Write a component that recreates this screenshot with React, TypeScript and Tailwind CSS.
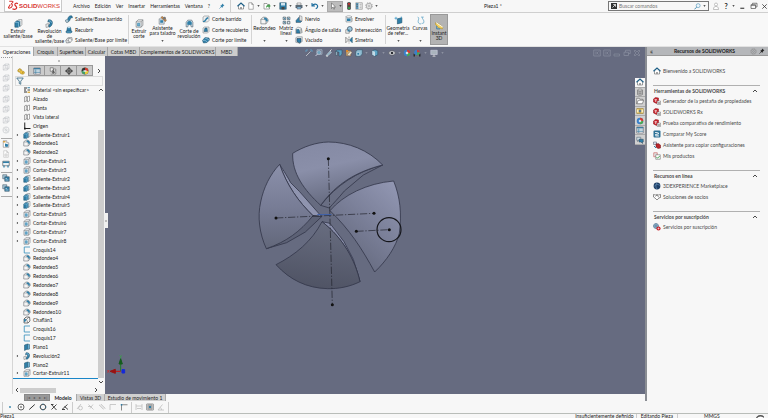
import { useState, type ReactNode } from "react";
import clsx from "clsx";

const B = "#2f7fa8";
const G = "#6f7478";

const icons: Record<string, ReactNode> = {
  home: (
    <>
      <path d="M3 8v6h10V8" fill="#fff" stroke="#444" />
      <path d="M1 8.5 8 2l7 6.5" fill="none" stroke="#1d5f86" strokeWidth="2.4" />
      <path d="M6.5 14v-4h3v4" fill="#888" />
    </>
  ),
  doc: <path d="M3.5 1.5h6l3 3.5v9.500h-9zM9.500 1.500V5h3" fill="#fff" stroke="#666" />,
  docFaint: <path d="M3.5 1.5h6l3 3.5v9.500h-9zM9.500 1.500V5h3M6 8h4v4H6z" fill="#fff" stroke="#bbb" strokeWidth="1.200" />,
  open: (
    <>
      <path d="M2 14V3h6l1 2h4v9z" fill="#fff" stroke="#555" />
      <path d="M6 12c0-5 2-6 5-6V3.500L15.500 8 11 12V9.500C9 9.500 7 10 6 12z" fill="#4ba052" />
    </>
  ),
  save: (
    <>
      <path d="M1.500 1.500h13v13h-13z" fill={B} stroke="#23485c" />
      <path d="M4 2h8v5H4z" fill="#cfe3ee" />
      <path d="M5 10h6v5H5z" fill="#444" />
    </>
  ),
  print: (
    <>
      <path d="M4 2h8v4H4z" fill="#fff" stroke="#555" />
      <path d="M1 6h14v6H1z" fill="#5a6b76" />
      <path d="M4 9.500h8V14H4z" fill="#8cc4e2" stroke="#445" />
    </>
  ),
  undo: <path d="M2 2v6h6M2.500 7.500C5 3.500 11 3 13 7c1 3-1 5.500-3.500 6.500" fill="none" stroke="#1f6f9f" strokeWidth="2.200" />,
  cursor: <path d="M5 2v11l2.600-2.500 2 4 1.600-.8-2-3.800H13z" fill="#fff" stroke="#444" />,
  traffic: (
    <>
      <rect x="4.500" y="0.500" width="7" height="15" rx="2" fill="#333" />
      <circle cx="8" cy="4" r="2" fill="#d33" />
      <circle cx="8" cy="8" r="1.600" fill="#865" />
      <circle cx="8" cy="12" r="2" fill="#3b5" />
    </>
  ),
  list: (
    <>
      <path d="M1.500 1.500h13v13h-13z" fill="#fff" stroke="#666" />
      <path d="M2 2h5v12H2z" fill="#5b93b3" />
      <path d="M9 4.500h4M9 8h4M9 11.500h4M3 5h3M3 9h3" stroke="#555" />
    </>
  ),
  gear: (
    <>
      <circle cx="8" cy="8" r="5.500" fill="none" stroke="#888" strokeWidth="1.300" />
      <circle cx="8" cy="8" r="7" fill="none" stroke="#999" strokeWidth="1.300" strokeDasharray="2.700 2.800" />
      <circle cx="8" cy="8" r="2.200" fill="none" stroke="#777" />
    </>
  ),
  pin: (
    <>
      <path d="M9 1.500 14.500 7l-2 .5-3 3-.5 2.500L3 7l2.500-.5 3-3z" fill={B} />
      <path d="m6 10-5 5" stroke={B} strokeWidth="1.500" />
    </>
  ),
  pinDark: (
    <>
      <path d="M9 1.500 14.500 7l-2 .5-3 3-.5 2.500L3 7l2.500-.5 3-3z" fill="#222" />
      <path d="m6 10-5 5" stroke="#222" strokeWidth="1.500" />
    </>
  ),
  user: (
    <>
      <circle cx="8" cy="5" r="3" fill="#fff" stroke="#888" />
      <path d="M3 15c0-5 2-6 5-6s5 1 5 6z" fill="#fff" stroke="#888" />
    </>
  ),
  search: (
    <>
      <circle cx="9.500" cy="6" r="4.500" fill="#eef6fb" stroke="#2f7fa8" strokeWidth="1.200" />
      <path d="m6 9.500-5 5" stroke="#2f7fa8" strokeWidth="2" />
    </>
  ),
  restore: <path d="M5 5V2.500h9V10h-3M2 5.500h9v7.500H2zM2 6.500h9" fill="none" stroke="#444" strokeWidth="1.300" />,
  min: <path d="M3 12h9" stroke="#333" strokeWidth="2.500" />,
  close: <path d="m3 3 10 10M13 3 3 13" stroke="#333" strokeWidth="1.800" />,
  extrude: (
    <>
      <path d="m6 3 2.500-2H14v9l-3 3.500z" fill="#f5f5f5" stroke={G} />
      <path d="m1.500 6 3-2.500h6V12L8 14.500H1.500z" fill={B} stroke="#1d4e68" />
      <path d="M1.500 6H8v8.500M8 6l2.500-2.500" fill="none" stroke="#9fd0ea" />
    </>
  ),
  revolve: (
    <>
      <path d="M6 1.500c5-1 8 2.500 7 6.500s-3 6-6 6.500l-3-3c3 0 5-2 5-4s-2-3-4-2z" fill={B} stroke="#1d4e68" />
      <path d="M1.500 9.500 6 8v6l-4 1z" fill="#eee" stroke={G} />
      <path d="M7 3c3 0 4.500 2 4.500 4" fill="none" stroke="#9fd0ea" />
    </>
  ),
  sweep: (
    <>
      <path d="M1 10.500C5 11 5 8 6.500 5S11 .5 14 2l1 3.500c-3-.5-4 1-5 4s-3 5-7 5z" fill={B} stroke="#1d4e68" />
      <circle cx="4" cy="12" r="2.800" fill="#b8d9ea" stroke={G} />
    </>
  ),
  loft: (
    <>
      <path d="M5 2.500h6L13 12H3z" fill={B} stroke="#1d4e68" />
      <ellipse cx="8" cy="3" rx="3" ry="1.500" fill="#b8d9ea" />
      <path d="m1.500 11.500 3-1.500h8l2 2-3 2h-8z" fill="#4f9cc4" stroke="#1d4e68" />
    </>
  ),
  boundary: (
    <>
      <path d="m1.500 9 4-5 8-1 1 5-4 5-7.500 1z" fill="#f3f3f3" stroke={G} strokeWidth="1.300" />
      <path d="M1.500 9c3-2 6 0 9 4M5.500 4c3 0 6 1 9 4M9 3.500C7 6 6 10 6.500 13.500" fill="none" stroke={G} />
    </>
  ),
  cut: (
    <>
      <path d="m2 5 3.500-3.500H14V11l-3 3.500H2z" fill="#f4f4f4" stroke={G} strokeWidth="1.200" />
      <path d="M2 5h9v9.500M11 5l3-3.500" fill="none" stroke={G} />
      <path d="M4.500 7.500h4v5h-4z" fill="#6fb0d0" stroke={B} />
    </>
  ),
  wizard: (
    <>
      <path d="M2 5h9v9.500H2z" fill="#cfe0ea" stroke={G} />
      <path d="M4 7.500h5v4.500H4z" fill={B} />
      <path d="m5 2 8 8 2-3-7-6z" fill="#d98b3c" stroke="#765" />
      <circle cx="11.500" cy="4" r="2.500" fill="#777" />
    </>
  ),
  cutRevolve: (
    <>
      <path d="M2 6 5 2h7l2 4v8h-3l-1-4H6l-1 4H2z" fill="#c9dbe5" stroke="#456" />
      <path d="M4 6c2-3 6-3 8 0v4H4z" fill={B} />
    </>
  ),
  cutSweep: (
    <>
      <path d="M2 4 5 2h9v9l-3 3H2z" fill="#eee" stroke={G} />
      <path d="M2 12c5 0 3-6 10-8l1 3c-5 1-4 6-8 7H2z" fill={B} />
    </>
  ),
  cutLoft: (
    <>
      <path d="M2 4 5 2h9v9l-3 3H2z" fill="#eee" stroke={G} />
      <path d="M6 4h4l1 7H4z" fill={B} stroke="#1d4e68" />
    </>
  ),
  cutBoundary: (
    <>
      <path d="m1 9 5-6 8 1 1 4-5 5-7 1z" fill={B} stroke="#1d4e68" />
      <path d="M2 9c3-1 6 0 8 3M6 4c3 1 6 2 8 4" fill="none" stroke="#cde8f5" />
    </>
  ),
  fillet: (
    <>
      <path d="m1.500 6 4-4C12 1.500 15 5 14.500 9l-4 5h-9z" fill="#f4f4f4" stroke={G} strokeWidth="1.200" />
      <path d="M7.500 2.500C12 2.500 14 5 14 9l-3 1C11 7 9.500 6 7 6z" fill={B} />
      <path d="M1.500 6H6c3 0 4.500 2 4.500 5v3" fill="none" stroke={G} />
    </>
  ),
  chamfer: (
    <>
      <path d="m2 6 4-4h7l1 8-4 4H2z" fill="#f4f4f4" stroke="#444" strokeWidth="1.400" />
      <path d="m2 6 5 1 3 7M7 7l5-5" fill="none" stroke="#444" />
      <path d="m2 6 5 1-2 4-3 1z" fill={B} />
    </>
  ),
  pattern: (
    <>
      <path d="M2 2h4.500v4.500H2zM9.500 2H14v4.500H9.500zM2 9.500h4.500V14H2zM9.500 9.500H14V14H9.500z" fill="#e0ebf1" stroke="#4c5c66" strokeWidth="1.300" />
      <path d="m3 3 3 3M10 3l3 3M3 10l3 3" stroke={B} strokeWidth="1.500" />
    </>
  ),
  rib: (
    <>
      <path d="M2 11 9 3v8l5 1-3 3H2z" fill={B} stroke="#456" />
      <path d="m9 1 5 2v9l-5-2z" fill="#e4e4e4" stroke={G} />
    </>
  ),
  draft: (
    <>
      <path d="m1.500 6 4-4 7 2 2 9-4 2h-9z" fill="#e9eff2" stroke={G} />
      <path d="M3 7h5l2 7H3z" fill={B} stroke="#1d4e68" />
      <path d="M12 5.500v8" stroke="#444" />
    </>
  ),
  shell: (
    <>
      <path d="M1.500 3.500 5 1.500h9.500v9l-4 4-9-2z" fill="#dfe7eb" stroke={G} />
      <path d="M4 5h8v7l-3 2-5-3z" fill={B} stroke="#234" />
    </>
  ),
  wrap: (
    <>
      <path d="M2 3h11v11H2z" fill="#dce6ec" stroke={G} />
      <ellipse cx="7.500" cy="3.500" rx="5.500" ry="2" fill="#fff" stroke={G} />
      <path d="M4 7h7v5H4z" fill={B} />
      <path d="M13 6h2.500v7H13z" fill="#bbb" />
    </>
  ),
  intersect: (
    <>
      <circle cx="9.500" cy="6" r="5" fill="#9cc8df" stroke="#345" strokeWidth="1.300" />
      <path d="M1.500 7.500h7v7h-7z" fill="#eee" stroke="#555" />
      <path d="M5 7.500h4v3.500H5z" fill={B} />
    </>
  ),
  mirror: (
    <>
      <path d="M1.500 2.500v11L6 9V7z" fill="#eee" stroke="#444" />
      <path d="M14.500 2.500v11L10 9V7z" fill={B} stroke="#1d4e68" />
      <path d="M8 1v14" stroke="#444" strokeDasharray="3 1" />
    </>
  ),
  refGeom: (
    <>
      <path d="m6 5 8-2v9l-8 2z" fill={B} stroke="#1d4e68" />
      <path d="M1 4h5M3.500 1.500v5M13 1v3" stroke="#4aa0cc" strokeWidth="1.500" />
    </>
  ),
  curves: (
    <path d="M3 2c4 1 0 6 1 9s3 3 5 3M9 2h4c-4 2 1 4 1 8s-2 3-4 3" fill="none" stroke="#5aa2c6" strokeWidth="1.400" />
  ),
  instant: (
    <>
      <path d="m1 3 6 2 7 6-1 3-7-2-5-6z" fill="#f2d05c" stroke="#a98a2a" />
      <path d="m2 3 12 8" stroke="#fff" strokeWidth="1.600" />
      <path d="M3 9v5h6" fill="none" stroke={B} strokeWidth="1.500" />
    </>
  ),
  part: (
    <>
      <path d="M1.500 6.500 4 3.500l4 .5 2 4 4 1 1 3-2.500 2.500-5-1L5 10l-3-.500z" fill="#ecc13f" stroke="#9a7818" />
      <circle cx="5.500" cy="6.500" r="1.800" fill="#fff3c0" stroke="#9a7818" />
      <circle cx="11.500" cy="11.500" r="1.200" fill="#9a7818" />
    </>
  ),
  table: (
    <>
      <path d="M1.500 2h13v12h-13z" fill="#fff" stroke="#445" />
      <path d="M1.500 2h13v3h-13z" fill="#3f7c9e" />
      <path d="M1.500 8h13M1.500 11h13M5.500 5v9" stroke="#3f7c9e" strokeWidth="1.300" />
    </>
  ),
  config: (
    <>
      <path d="M2.500 1.500h6v7h-6zM5.500 11h2v3h-4M9 4h4.500v10H9z" fill="#eee" stroke="#444" />
      <path d="m6 7 6 5M12 7l-5 5" stroke="#444" strokeWidth="1.500" />
    </>
  ),
  target: (
    <>
      <circle cx="8" cy="8" r="4.800" fill="none" stroke="#222" strokeWidth="1.600" />
      <path d="M8 0v16M0 8h16" stroke="#222" strokeWidth="1.600" />
    </>
  ),
  ball: (
    <>
      <circle cx="8" cy="8" r="6.500" fill="#e8c93a" stroke="#333" />
      <path d="M8 8V1.500A6.500 6.500 0 0 1 14.500 8z" fill="#d23b32" />
      <path d="M8 8H1.500A6.500 6.500 0 0 1 8 1.500z" fill="#2f3338" />
      <path d="M8 8v6.500A6.500 6.500 0 0 0 14.500 8z" fill="#e8c93a" />
      <path d="M8 8v6.500A6.500 6.500 0 0 1 1.500 8z" fill="#3f9f6b" />
      <path d="M5 6.500h6v3H5z" fill="#e9eef2" />
    </>
  ),
  globeBall: (
    <>
      <circle cx="8" cy="8" r="6.500" fill="#3a80c9" />
      <path d="M8 8V1.500A6.500 6.500 0 0 1 14.500 8z" fill="#d23b32" />
      <path d="M8 8v6.500A6.500 6.500 0 0 0 14.500 8z" fill="#4aa653" />
      <path d="M5 8 8 5l3 3-3 3z" fill="#e8eef2" />
    </>
  ),
  scene: (
    <>
      <circle cx="8" cy="7" r="5.500" fill="#3a80c9" />
      <path d="M8 7V1.500A5.500 5.500 0 0 1 13.500 7z" fill="#d23b32" />
      <path d="M8 7v5.500A5.500 5.500 0 0 0 13.500 7z" fill="#4aa653" />
      <path d="M1 15V9l4 3h6l4-3v6z" fill="#2a2d33" />
      <path d="M5 12.500h2V15H5zM9 12.500h2V15H9z" fill="#ddd" />
    </>
  ),
  funnel: <path d="M1.500 2h13L9.500 8.500v6l-3-1.500V8.500z" fill="#eaf4fa" stroke="#2c5d78" strokeWidth="1.500" />,
  material: (
    <>
      <path d="M2 4h6M2 8h4M2 12h6" stroke="#333" strokeWidth="2" />
      <path d="M9 3.500h5" stroke={B} strokeWidth="2" />
      <path d="M9 8h5" stroke="#444" strokeWidth="2" />
      <path d="M9 12.500h5" stroke="#d9a52c" strokeWidth="2.500" />
    </>
  ),
  plane: <path d="m3 4 3.500-2v10L3 14zM9 3.500 13 2v10l-4 1.500zM6.500 4H9M6.500 12H9" fill="#fff" stroke="#666" strokeWidth="1.100" />,
  origin: (
    <>
      <path d="M3.500 1v12H15" fill="none" stroke="#222" strokeWidth="2" />
      <path d="M2 11.500h3.500V15H2z" fill="#222" />
    </>
  ),
  sketch: <path d="M14 2H2.500v12H14" fill="none" stroke="#3f93bd" strokeWidth="1.700" />,
  bluePlane: (
    <>
      <path d="m3 4 6-2v10l-6 3z" fill={B} stroke="#1d4e68" />
      <path d="m9 2 4 1v9l-4 1z" fill="#68b0d4" stroke="#1d4e68" />
    </>
  ),
  cube: <path d="m2.500 5 4-3H14v8.500l-3.500 3.500h-8zM2.500 5h8v9M10.500 5 14 2M6.500 2v8.500H14M6.500 10.500l-4 3.500" fill="none" stroke="#c3c6c9" strokeWidth="1.200" />,
  sphere: (
    <>
      <circle cx="8" cy="8" r="6.300" fill="none" stroke="#c3c6c9" strokeWidth="1.200" />
      <path d="M2 8h12M8 2v12M4 4l8 8" stroke="#c3c6c9" />
    </>
  ),
  macro: (
    <>
      <path d="M2.500 1.500h7v4h4v9h-11z" fill="#fff" stroke="#666" />
      <path d="m6 7 7 2-2 5-5-1z" fill={B} />
      <path d="M2 2h5v3H2z" fill="#d9a54a" />
    </>
  ),
  screen: (
    <>
      <path d="M1.500 2.500h13v9h-13z" fill="#e9f2f7" stroke="#555" strokeWidth="1.300" />
      <path d="M2 3h12v3H2z" fill={B} />
      <path d="M4 11v4M12 11v4" stroke={B} strokeWidth="2.500" />
    </>
  ),
  stack: (
    <>
      <path d="M1.500 1.500h8v8h-8z" fill="#a8cadb" stroke="#345" />
      <path d="M5.500 5.500h9v9h-9z" fill={B} stroke="#345" />
      <path d="M7 12h6M7 9h3" stroke="#fff" />
    </>
  ),
  zoomFit: (
    <>
      <path d="M2 6V2h4M10 2h4v4" fill="none" stroke="#5fa6cc" strokeWidth="1.500" />
      <path d="m2 14 9-9" stroke="#b9bcc3" strokeWidth="2" />
    </>
  ),
  zoomArea: (
    <>
      <path d="M4 1.500h10v9H4z" fill="none" stroke="#a5b9c8" strokeWidth="1.500" />
      <circle cx="8" cy="7" r="4" fill="#6fa3bd" stroke="#ccd" />
      <path d="m5 10-4 4" stroke="#ccd" strokeWidth="2" />
    </>
  ),
  brush: (
    <>
      <path d="m2 13 8-9 3 3-8 7z" fill="#8fb3c6" stroke="#cfd6dc" />
      <path d="m10 4 3-3M2 14h4" stroke="#ddd" strokeWidth="2" />
    </>
  ),
  section: (
    <>
      <path d="M1.500 4 5 2h9v8l-3 4H8V6H1.500z" fill="#5ea4c6" stroke="#284a5c" />
      <path d="M1.500 5h3v8h-3z" fill="#a9c9d8" stroke="#345" />
    </>
  ),
  paint: (
    <>
      <path d="M2 3h10v11H2z" fill="#caa770" stroke="#655" />
      <path d="m4 12 7-8 3 3-5 7z" fill="#e7e0cb" stroke="#765" />
      <path d="M2 2h4v4H2z" fill="#d9882c" />
    </>
  ),
  orient: (
    <>
      <path d="m1.500 5 4-3.500h9V10l-4 4.500h-9z" fill="#8fbcd2" stroke="#284a5c" />
      <path d="M4 7h5v5H4z" fill={B} stroke="#d5e6ee" />
    </>
  ),
  display: (
    <>
      <path d="m8 1.500 5.500 2v8L8 14.500l-5.500-3v-8z" fill="#5ea4c6" stroke="#284a5c" />
      <path d="m2.500 3.500 5.500 2v9l-5.500-3z" fill="#c5dbe6" />
    </>
  ),
  eye: (
    <>
      <path d="M1 8c4-6 10-6 14 0-4 6-10 6-14 0z" fill="#dfe2e6" stroke="#444" />
      <circle cx="8" cy="8" r="2.700" fill="#2a2d33" />
    </>
  ),
  monitor: (
    <>
      <path d="M1.500 2.500h13v8.500h-13z" fill="#aab4bd" stroke="#dde" />
      <path d="M8 11v3M5 14.500h6" stroke="#ddd" strokeWidth="1.500" />
    </>
  ),
  boxIn: <path d="M1.500 2h13v12h-13zM6 5v6M11 5 8 8l3 3" fill="none" stroke="#8b90a0" strokeWidth="1.400" />,
  ghostMin: <path d="M2 10h11v4H2z" fill="none" stroke="#8b90a0" strokeWidth="1.200" />,
  ghostRestore: <path d="M5 6V2.500h9.500V9H11M2 6.500h9V13H2z" fill="none" stroke="#8b90a0" strokeWidth="1.400" />,
  ghostClose: <path d="m2 4 2-2 4 4 4-4 2 2-4 4 4 4-2 2-4-4-4 4-2-2 4-4z" fill="none" stroke="#8b90a0" strokeWidth="1.300" />,
  db: (
    <>
      <path d="M3 4v9c2 2 8 2 10 0V4" fill="#bbb" stroke="#555" />
      <ellipse cx="8" cy="4" rx="5" ry="2" fill="#e5e5e5" stroke="#555" />
      <path d="M5 8h6M5 11h6" stroke="#666" />
    </>
  ),
  folder: <path d="M1.500 13.500v-11h5l1 2h6v2M1.500 13.500l3-7h11l-3 7z" fill="#fff" stroke="#555" strokeWidth="1.200" />,
  view: (
    <>
      <path d="M1.500 3h13v10h-13z" fill="#e6bf52" stroke="#8d7329" />
      <circle cx="8" cy="8" r="3" fill="#5d7b8d" />
      <path d="M2 5h3v6H2zM11 5h3v6h-3z" fill="#f9efc8" />
    </>
  ),
  chat: (
    <>
      <path d="M1.500 2.500h8v6H5l-2 2.500V8.500H1.500z" fill="#cfdde5" stroke="#456" />
      <path d="M6 6.500h8.500V12H13v3l-3-3H6z" fill={B} stroke="#345" />
    </>
  ),
  redTool: (
    <>
      <path d="M1 4 5 1l6 1v8l-4 3-6-3z" fill="#c8232c" stroke="#8c141b" />
      <path d="M3 5.500h5M5.500 5v5" stroke="#fff" strokeWidth="1.400" />
      <path d="M8.500 8h6.500v7H8.500z" fill="#fff" stroke="#666" />
      <path d="m10 10 4 4M14 10l-4 4" stroke="#555" />
    </>
  ),
  score: (
    <>
      <rect x="1" y="1" width="14" height="14" rx="2" fill="#2e7196" />
      <path d="M4 5h5l3 2-4 1-4 2h7M5 12h7" fill="none" stroke="#fff" strokeWidth="1.600" />
    </>
  ),
  copyCfg: (
    <>
      <path d="M1 2h6v5H1z" fill="#dde" stroke="#456" />
      <path d="M6 5.500h6l3 3V14l-5 1-4-3z" fill="#b9262d" stroke="#6d1217" />
      <path d="m2 10 4 4" stroke={B} strokeWidth="2" />
    </>
  ),
  products: (
    <>
      <path d="M1.500 1.500h7v8h-7z" fill="#e9e9e9" stroke="#b33" />
      <path d="M5.500 5.500h9v9h-9z" fill="#fff" stroke="#555" />
      <path d="m7 10 2 2.500L13.500 8" fill="none" stroke="#39a04a" strokeWidth="1.800" />
    </>
  ),
  globe: (
    <>
      <circle cx="8" cy="8" r="6.800" fill="#1f3f66" />
      <path d="M2 9c4-5 8-5 12-2M8 1.500c-3 4-3 9 0 13" fill="none" stroke="#6f9ac4" strokeWidth="1.200" />
    </>
  ),
  shake: <path d="m1 3 4 1 3-1 3 1 4-1v6l-3 1-4 4-4-4-3-2zM5 7l3-3 4 5" fill="#fff" stroke="#555" strokeWidth="1.300" />,
  subs: (
    <>
      <circle cx="6" cy="6" r="5" fill="#9cc3da" stroke="#357" />
      <path d="M6 1v10M1 6h10" stroke="#357" />
      <circle cx="11" cy="11" r="4.200" fill="#c8232c" />
      <path d="M9 11h4M11 9v4" stroke="#fff" />
    </>
  ),
  point: <circle cx="8" cy="8" r="1.800" fill={B} />,
  circleDot: (
    <>
      <circle cx="8" cy="8" r="6" fill="none" stroke="#333" strokeWidth="1.500" />
      <circle cx="8" cy="8" r="1.600" fill="#333" />
    </>
  ),
  line: <path d="M2.500 13 13.500 3" stroke="#333" strokeWidth="2" />,
  circle: (
    <>
      <circle cx="8" cy="8" r="5.500" fill="none" stroke="#333" strokeWidth="1.800" />
      <path d="M8 1v3M8 12v3M1 8h3M12 8h3" stroke={B} strokeWidth="1.500" />
    </>
  ),
  trim: <path d="m2 2 11 12M13 3 3 13M2 3h5" fill="none" stroke="#333" strokeWidth="1.800" />,
  extend: <path d="M2 13 13 3M7 7l7 6M2 13h6" fill="none" stroke="#333" strokeWidth="1.800" />,
  tangent: (
    <>
      <circle cx="9" cy="10" r="3.800" fill="none" stroke="#bbb" strokeWidth="1.500" />
      <path d="m2 12 8-10" stroke="#bbb" strokeWidth="1.500" />
    </>
  ),
  faintX: <path d="m3 3 10 10M12 3 6 11M2 7h6" stroke="#bbb" strokeWidth="1.500" />,
  parallel: <path d="m2 4 9 9M6 2l9 9M4 3l9 9" stroke="#bbb" strokeWidth="1.300" />,
  corner: <path d="M2 14V3h12" fill="none" stroke="#bbb" strokeWidth="1.500" />,
  cornerDark: (
    <>
      <path d="M3 15V3.500h12" fill="none" stroke="#666" strokeWidth="1.500" />
      <path d="M1.500 2h3v3h-3z" fill={B} />
    </>
  ),
  dim: <path d="M2 2v12M14 2v12M2 6h12M4 11h8" fill="none" stroke="#bbb" strokeWidth="1.500" />,
  grid: (
    <>
      <path d="M1.500 2h13v12h-13zM1.500 6h13M1.500 10h13M6 2v12M10 2v12" fill="#fff" stroke="#444" strokeWidth="1.100" />
      <path d="M6 6h4v4H6z" fill={B} />
    </>
  ),
  angle: <path d="M14 14H2L11 3M9 14c0-3-1-4-3-5" fill="none" stroke="#bbb" strokeWidth="1.500" />,
};

function Icon({ name, className = "size-2" }: { name: string; className?: string }) {
  return (
    <svg viewBox="0 0 16 16" className={clsx("shrink-0", className)} aria-hidden="true">
      {icons[name]}
    </svg>
  );
}

function Caret({ className }: { className?: string }) {
  return (
    <svg viewBox="0 0 9 6" className={clsx("h-[2px] w-[3px] shrink-0", className)} aria-hidden="true">
      <path d="M1 1h7L4.500 5z" fill="currentColor" />
    </svg>
  );
}

const menus = ["Archivo", "Edición", "Ver", "Insertar", "Herramientas", "Ventana", "?"];

function TitleBar() {
  return (
    <header className="flex h-[13px] shrink-0 items-center border-b border-[#cfcfcf] bg-[#f7f7f7]">
      <div className="ml-1 flex h-full w-[58px] shrink-0 items-center border-x border-b border-[#c9c9c9] bg-white pl-[2px] text-[#d6312b]">
        <svg viewBox="0 0 33 30" className="h-[11px] w-[12px] shrink-0" aria-hidden="true">
          <path d="M6 3h8c4 0 3 5-3 7M11 10c7 1 3 11-3 12-4 1-5-1-3-3l4-7" fill="none" stroke="currentColor" strokeWidth="2.800" />
          <path d="M30 10c-5-3-10 0-8 4 2 3 7 5 4 9-2 3-8 3-11 1" fill="none" stroke="currentColor" strokeWidth="3.400" />
        </svg>
        <span className="font-['Liberation_Sans',sans-serif] text-[6px] leading-none">
          <b>SOLID</b>WORKS
        </span>
      </div>
      <nav className="ml-[11px] flex w-[153px] shrink-0 items-center gap-[5px]">
        {menus.map((m) => (
          <button key={m}>{m}</button>
        ))}
        <button aria-label="Fijar menú" className="ml-1">
          <Icon name="pin" className="size-[6px]" />
        </button>
      </nav>
      <div className="ml-[4px] flex h-full shrink-0 items-center border-l border-[#cfcfcf] pl-[6px]">
        <button aria-label="Inicio" className="mr-[2px]">
          <Icon name="home" />
        </button>
        {["doc", "open", "save", "print", "undo"].map((n) => (
          <button key={n} aria-label={n} className="flex w-4 items-center gap-[2px]">
            <Icon name={n} />
            <Caret />
          </button>
        ))}
        <button aria-label="Seleccionar" className="flex h-[11px] w-4 items-center justify-center gap-[2px] border border-[#aaa] bg-[#bcbcbc]">
          <Icon name="cursor" />
          <Caret />
        </button>
        <button aria-label="Reconstruir" className="ml-[2px]">
          <Icon name="traffic" />
        </button>
        <button aria-label="Propiedades" className="ml-[2px]">
          <Icon name="list" />
        </button>
        <button aria-label="Opciones" className="ml-[2px] flex items-center gap-[2px]">
          <Icon name="gear" />
          <Caret />
        </button>
      </div>
      <span className="flex-1 text-center">Pieza1 *</span>
      <label className="flex h-[10px] w-[101px] shrink-0 items-center gap-[2px] border border-[#777] bg-[#f7f7f7] px-[2px]">
        <svg viewBox="0 0 16 16" className="size-[6px] shrink-0" aria-hidden="true">
          <path d="M0 0h16v16H0z" fill="#333" />
          <path d="m4 12 8-8M6 4h6v6" fill="none" stroke="#fff" strokeWidth="2" />
        </svg>
        <input aria-label="Buscar comandos" placeholder="Buscar comandos" className="min-w-0 flex-1 bg-transparent outline-none placeholder:text-[#777]" />
        <Icon name="search" className="size-[7px]" />
        <Caret />
      </label>
      <div className="ml-[3px] flex shrink-0 items-center gap-[2px]">
        <button aria-label="Cuenta">
          <Icon name="user" />
        </button>
        <button className="flex w-[15px] items-center justify-center gap-[4px] text-[7px] font-bold">
          ?<Caret />
        </button>
        <button aria-label="Minimizar">
          <Icon name="min" className="size-[7px]" />
        </button>
        <button aria-label="Restaurar" className="ml-[2px]">
          <Icon name="restore" />
        </button>
        <button aria-label="Cerrar" className="ml-px">
          <Icon name="close" className="size-[7px]" />
        </button>
      </div>
    </header>
  );
}

type BigProps = { icon: string; lines: string[]; width: string; menu?: boolean };

function BigButton({ icon, lines, width, menu }: BigProps) {
  return (
    <button className={clsx("relative flex h-full shrink-0 flex-col items-center gap-px", width, menu ? "pt-[3px]" : "pt-[6px]")}>
      <Icon name={icon} className="size-[9px]" />
      <span className="block leading-[5px]">
        {lines.map((l) => (
          <span key={l} className="block">
            {l}
          </span>
        ))}
      </span>
      {menu && <Caret className="absolute bottom-1" />}
    </button>
  );
}

function SmallColumn({ items, width }: { items: [string, string][]; width: string }) {
  return (
    <div className={clsx("flex h-full shrink-0 flex-col justify-between py-[2px]", width)}>
      {items.map(([icon, label]) => (
        <button key={label} className="flex items-center gap-[2px]">
          <Icon name={icon} />
          {label}
        </button>
      ))}
    </div>
  );
}

const Divider = () => <div className="h-[29px] w-px shrink-0 bg-[#d4d4d4]" />;

function Ribbon() {
  return (
    <div className="flex h-[34px] shrink-0 items-center border-b border-[#e2e2e2] bg-[#f8f8f8] pl-[2px]">
      <BigButton icon="extrude" lines={["Extruir", "saliente/base"]} width="w-8" />
      <BigButton icon="revolve" lines={["Revolución", "de", "saliente/base"]} width="w-[31px]" />
      <SmallColumn
        width="w-[63px]"
        items={[
          ["sweep", "Saliente/Base barrido"],
          ["loft", "Recubrir"],
          ["boundary", "Saliente/Base por límite"],
        ]}
      />
      <Divider />
      <BigButton icon="cut" lines={["Extruir", "corte"]} width="w-5" />
      <BigButton icon="wizard" lines={["Asistente", "para taladro"]} width="w-[27px]" menu />
      <BigButton icon="cutRevolve" lines={["Corte de", "revolución"]} width="w-[26px]" />
      <SmallColumn
        width="w-[49px]"
        items={[
          ["cutSweep", "Corte barrido"],
          ["cutLoft", "Corte recubierto"],
          ["cutBoundary", "Corte por límite"],
        ]}
      />
      <Divider />
      <BigButton icon="fillet" lines={["Redondeo"]} width="w-[25px]" menu />
      <BigButton icon="pattern" lines={["Matriz", "lineal"]} width="w-[18px]" menu />
      <SmallColumn
        width="w-[50px]"
        items={[
          ["rib", "Nervio"],
          ["draft", "Ángulo de salida"],
          ["shell", "Vaciado"],
        ]}
      />
      <SmallColumn
        width="w-10"
        items={[
          ["wrap", "Envolver"],
          ["intersect", "Intersección"],
          ["mirror", "Simetría"],
        ]}
      />
      <Divider />
      <BigButton icon="refGeom" lines={["Geometría", "de refer..."]} width="w-6" menu />
      <BigButton icon="curves" lines={["Curvas"]} width="w-5" menu />
      <div className="h-[31px] border border-[#999] bg-[#b3b3b3]">
        <BigButton icon="instant" lines={["Instant", "3D"]} width="w-4" />
      </div>
    </div>
  );
}

const commandTabs: [string, string][] = [
  ["Operaciones", "w-[34px]"],
  ["Croquis", "w-6"],
  ["Superficies", "w-7"],
  ["Calcular", "w-[22px]"],
  ["Cotas MBD", "w-8"],
  ["Complementos de SOLIDWORKS", "w-[76px]"],
  ["MBD", "w-[22px]"],
];

function CommandTabs() {
  const [active, setActive] = useState("Operaciones");
  return (
    <div className="relative z-10 flex h-[9px] shrink-0 items-start bg-[#666b80]">
      <div role="tablist" className="flex h-full shrink-0">
        {commandTabs.map(([label, width]) => (
          <button
            key={label}
            role="tab"
            aria-selected={active === label}
            onClick={() => setActive(label)}
            className={clsx(
              "flex h-full items-center justify-center border-r border-[#a5a5a5]",
              width,
              active === label ? "bg-[#f8f8f8]" : "bg-[#cdcdcd]",
            )}
          >
            {label}
          </button>
        ))}
      </div>
      <div className="flex flex-1 items-center pt-[2px] pr-1 text-[#9a9eab]">
        <div className="ml-[67px] flex items-center gap-[2px]">
          {["zoomFit", "zoomArea", "brush", "section", "paint", "orient"].map((n) => (
            <button key={n} aria-label={n}>
              <Icon name={n} />
            </button>
          ))}
          <Caret />
          <button aria-label="Estilo de visualización" className="ml-px flex items-center gap-[3px]">
            <Icon name="display" />
            <Caret />
          </button>
          <button aria-label="Ocultar/mostrar" className="ml-px flex items-center gap-[2px]">
            <Icon name="eye" />
            <Caret />
          </button>
          <button aria-label="Editar apariencia">
            <Icon name="globeBall" />
          </button>
          <button aria-label="Aplicar escena" className="flex items-center gap-[3px]">
            <Icon name="scene" />
            <Caret />
          </button>
          <button aria-label="Configuración de vista" className="ml-px flex items-center gap-[3px]">
            <Icon name="monitor" />
            <Caret />
          </button>
        </div>
        <div className="ml-auto flex gap-[2px]">
          {["boxIn", "boxIn", "ghostMin", "ghostRestore", "ghostClose"].map((n, i) => (
            <button key={i} aria-label={n}>
              <Icon name={n} />
            </button>
          ))}
        </div>
      </div>
    </div>
  );
}

const viewTools: { height: string; names: string[] }[] = [
  { height: "h-[77px]", names: ["cube", "cube", "cube", "cube", "cube", "cube", "sphere"] },
  { height: "h-[34px]", names: ["macro", "docFaint", "screen"] },
  { height: "h-6", names: ["stack", "stack"] },
];

function SideTools() {
  return (
    <div className="flex w-[13px] shrink-0 flex-col items-center border-r border-[#d5d5d5] bg-[#f7f7f7]">
      <span className="mt-px mb-1 h-px w-[11px] shrink-0 border-t border-dotted border-[#999]" />
      {viewTools.map(({ height, names }, g) => (
        <div key={g} className={clsx("flex w-[11px] shrink-0 flex-col items-center justify-between border-b border-[#aaa] pt-px pb-1", height)}>
          {names.map((n, i) => (
            <button key={i} aria-label={`Vista ${g + 1}.${i + 1}`}>
              <Icon name={n} />
            </button>
          ))}
        </div>
      ))}
    </div>
  );
}

// [icon, label, has children]
const tree: [string, string, boolean][] = [
  ["material", "Material <sin especificar>", false],
  ["plane", "Alzado", false],
  ["plane", "Planta", false],
  ["plane", "Vista lateral", false],
  ["origin", "Origen", false],
  ["extrude", "Saliente-Extruir1", true],
  ["fillet", "Redondeo1", false],
  ["fillet", "Redondeo2", false],
  ["cut", "Cortar-Extruir1", true],
  ["cut", "Cortar-Extruir3", true],
  ["extrude", "Saliente-Extruir2", true],
  ["extrude", "Saliente-Extruir3", true],
  ["extrude", "Saliente-Extruir4", true],
  ["extrude", "Saliente-Extruir5", true],
  ["cut", "Cortar-Extruir5", true],
  ["cut", "Cortar-Extruir6", true],
  ["cut", "Cortar-Extruir7", true],
  ["cut", "Cortar-Extruir8", true],
  ["sketch", "Croquis14", false],
  ["fillet", "Redondeo4", false],
  ["fillet", "Redondeo5", false],
  ["fillet", "Redondeo6", false],
  ["fillet", "Redondeo7", false],
  ["fillet", "Redondeo8", false],
  ["fillet", "Redondeo9", false],
  ["fillet", "Redondeo10", false],
  ["chamfer", "Chaflán1", false],
  ["sketch", "Croquis16", false],
  ["sketch", "Croquis17", false],
  ["bluePlane", "Plano1", false],
  ["revolve", "Revolución2", true],
  ["bluePlane", "Plano2", false],
  ["cut", "Cortar-Extruir11", true],
];

function Chevron({ d }: { d: string }) {
  return (
    <svg viewBox="0 0 8 8" className="size-[4px] shrink-0" aria-hidden="true">
      <path d={d} fill="none" stroke="#333" strokeWidth="1.800" />
    </svg>
  );
}

function FeatureManager() {
  return (
    <aside className="flex w-[92px] shrink-0 flex-col bg-[#f7f7f7]">
      <div className="flex h-[9px] shrink-0 items-center justify-center">
        <span className="size-[2px] rounded-full bg-[#aaa]" />
      </div>
      <div className="flex h-[11px] shrink-0 items-stretch">
        {["part", "table", "config", "target", "ball"].map((n, i) => (
          <button
            key={n}
            aria-label={n}
            className={clsx(
              "flex w-4 items-center justify-center border-r border-[#999]",
              i === 0 ? "bg-[#f7f7f7]" : "border-y bg-[#cbcbcb]",
            )}
          >
            <Icon name={n} />
          </button>
        ))}
        <button aria-label="Más" className="flex w-3 items-center justify-center">
          <Chevron d="m2 0 4 4-4 4" />
        </button>
      </div>
      <label className="mx-[2px] flex h-[10px] shrink-0 items-center border border-[#ddd]">
        <Icon name="funnel" />
        <input aria-label="Filtrar árbol" className="min-w-0 flex-1 bg-transparent outline-none" />
      </label>
      <div className="flex min-h-0 flex-1">
        <div className="flex min-w-0 flex-1 flex-col">
          <ul className="flex min-h-0 flex-1 flex-col">
            {tree.map(([icon, label, branch]) => (
              <li key={label} className="flex min-h-0 flex-1 items-center pl-[3px]">
                <span className="w-[7px]">{branch && <Caret className="-rotate-90" />}</span>
                <Icon name={icon} />
                <span className="ml-[2px]">{label}</span>
              </li>
            ))}
          </ul>
          <div className="h-px shrink-0 bg-[#1a86c8]" />
          <div className="h-[7px] shrink-0" />
        </div>
        <div className="flex w-[6px] shrink-0 flex-col items-center gap-[2px] py-[2px]">
          <Chevron d="m0 6 4-4 4 4" />
          <div className="mt-[36px] w-full flex-1 bg-[#cdcdcd]" />
          <Chevron d="m0 2 4 4 4-4" />
        </div>
        <div className="w-px shrink-0" />
      </div>
      <div className="flex h-2 shrink-0 items-center gap-px pr-[7px] pl-[2px]">
        <Chevron d="M6 0 2 4l4 4" />
        <div className="h-[5px] w-9 bg-[#cdcdcd]" />
        <span className="flex-1" />
        <Chevron d="m2 0 4 4-4 4" />
      </div>
    </aside>
  );
}

const taskTabs = ["home", "db", "folder", "view", "globeBall", "table", "chat"];

function Viewport() {
  return (
    <main className="relative min-w-0 flex-1 bg-[#666b80]">
      <svg viewBox="-405 -222 1620 1014" className="absolute inset-0 size-full" role="img" aria-label="Modelo 3D">
        <defs>
          <linearGradient id="top" x1="0" y1="0" x2="0.300" y2="1">
            <stop offset="0" stopColor="#8489a3" />
            <stop offset="0.450" stopColor="#8a8fa9" />
            <stop offset="1" stopColor="#666b80" />
          </linearGradient>
          <linearGradient id="right" x1="1" y1="0" x2="0.300" y2="1">
            <stop offset="0" stopColor="#9499b5" />
            <stop offset="0.500" stopColor="#7b8099" />
            <stop offset="1" stopColor="#62677b" />
          </linearGradient>
          <linearGradient id="bottom" x1="0.600" y1="0" x2="0.400" y2="1">
            <stop offset="0" stopColor="#686d80" />
            <stop offset="1" stopColor="#4f5364" />
          </linearGradient>
          <linearGradient id="left" x1="0.500" y1="0" x2="0.500" y2="1">
            <stop offset="0" stopColor="#8b90aa" />
            <stop offset="0.500" stopColor="#787d96" />
            <stop offset="1" stopColor="#62677a" />
          </linearGradient>
        </defs>
        <g stroke="#34374a" strokeWidth="2.500" strokeLinejoin="round">
          <path d="M428 105 L370 135 L313 183 C295 205 280 220 268 234 L242 226 C290 165 350 125 428 105Z" fill="#696e83" />
          <path d="M158 70 C190 50 228 37 265 36 C325 36 385 60 428 105 C350 125 290 160 242 226 C192 180 156 130 158 70Z" fill="url(#top)" />
          <path d="M461 153 C480 200 486 250 478 310 C468 350 440 392 404 426 C365 355 330 300 270 242 C310 195 380 160 461 153Z" fill="url(#right)" />
          <path d="M246 275 L270 280 L312 335 L340 388 L360 455 C345 390 310 325 246 275Z" fill="#8a8fab" />
          <path d="M108 404 C165 375 215 335 246 275 C310 325 345 390 360 455 C330 470 295 477 262 476 C200 474 150 450 108 404Z" fill="url(#bottom)" />
          <path d="M119 103 C124 112 140 135 152 158 L178 184 L245 260 L219 257 C175 215 140 165 119 103Z" fill="#8f94af" />
          <path d="M79 356 C140 335 180 300 219 257 L245 260 L196 306 L140 338Z" fill="#5c6175" />
          <path d="M119 103 C140 165 175 215 219 257 C180 305 140 335 79 356 C58 310 52 260 62 216 C70 175 90 133 119 103Z" fill="url(#left)" />
        </g>
        <g stroke="#1f212a" strokeWidth="2" strokeDasharray="22 5 4 5">
          <path d="M265 86 277 524" />
          <path d="M108 264 402 250" />
          <path d="M349 304 448 299" />
        </g>
        <path d="M232 254h42" stroke="#3b5fae" strokeWidth="3" />
        <g fill="#111">
          <circle cx="265" cy="86" r="4.500" />
          <circle cx="277" cy="524" r="4.500" />
          <circle cx="108" cy="264" r="4.500" />
          <circle cx="402" cy="250" r="4.500" />
          <circle cx="349" cy="304" r="4.500" />
          <circle cx="448" cy="299" r="4.500" />
        </g>
        <circle cx="447" cy="299" r="36" fill="none" stroke="#14151a" strokeWidth="3.500" />
        <g strokeWidth="3">
          <path d="M-358 724v-26" stroke="#1f7a2a" />
          <path d="m-363 702 5-16 5 16z" fill="#145c1d" stroke="#145c1d" />
          <path d="m-361 676 3 4 3-4M-358 680v5" stroke="#2fae3c" fill="none" strokeWidth="2" />
          <path d="M-358 724h-26" stroke="#c11" />
          <path d="m-374 718-16 6 16 6z" fill="#911" stroke="#911" />
          <path d="m-398 720 6 8m0-8-6 8" stroke="#d22" strokeWidth="2" />
          <path d="M-354 719h8v10h-8z" fill="#1429d8" stroke="#1429d8" />
        </g>
      </svg>
      <button aria-label="Contraer panel" className="absolute top-[157px] -left-px flex h-[15px] w-[4px] items-center justify-center bg-[#f0f0f0]">
        <span className="size-[2px] rounded-full border border-[#999]" />
      </button>
      <div className="absolute top-[22px] right-0 flex h-[67px] w-[10px] flex-col">
        {taskTabs.map((n, i) => (
          <button
            key={n}
            aria-label={n}
            className={clsx("flex flex-1 items-center justify-center border-b border-[#aaa]", i === 0 ? "bg-[#f7f7f7]" : "bg-[#d0d0d0]")}
          >
            <Icon name={n} />
          </button>
        ))}
      </div>
    </main>
  );
}

function ModelTabs() {
  return (
    <div className="flex h-[7px] shrink-0 bg-[#f7f7f7] pl-[24px]">
      <div className="flex w-[26px] items-center justify-around border border-[#888] bg-[#999] text-[4px] text-[#555]">
        {["|◂", "◂", "▸", "▸|"].map((g) => (
          <button key={g}>{g}</button>
        ))}
      </div>
      <button className="w-[26px] font-bold">Modelo</button>
      <button className="w-[29px] border-x border-[#aaa] bg-[#d0d0d0]">Vistas 3D</button>
      <button className="w-[61px] border-r border-[#aaa] bg-[#d0d0d0]">Estudio de movimiento 1</button>
    </div>
  );
}

const resources: { title: string; links: [string, string][] }[] = [
  {
    title: "Herramientas de SOLIDWORKS",
    links: [
      ["redTool", "Generador de la pestaña de propiedades"],
      ["redTool", "SOLIDWORKS Rx"],
      ["redTool", "Prueba comparativa de rendimiento"],
      ["score", "Comparar My Score"],
      ["copyCfg", "Asistente para copiar configuraciones"],
      ["products", "Mis productos"],
    ],
  },
  {
    title: "Recursos en línea",
    links: [
      ["globe", "3DEXPERIENCE Marketplace"],
      ["shake", "Soluciones de socios"],
    ],
  },
  { title: "Servicios por suscripción", links: [["subs", "Servicios por suscripción"]] },
];

function TaskPane() {
  return (
    <aside className="flex w-[123px] shrink-0 flex-col border-l-2 border-[#8a8d93] bg-[#f7f7f7]">
      <div className="flex h-[9px] shrink-0 items-center border-b border-[#999] bg-[#b5b7ba] px-[3px]">
        <button aria-label="Contraer" className="text-[7px] leading-none">
          «
        </button>
        <h2 className="flex-1 pl-[6px] text-center font-bold">Recursos de SOLIDWORKS</h2>
        <button aria-label="Ajustes">
          <Icon name="gear" className="size-[7px]" />
        </button>
        <button aria-label="Fijar" className="ml-[2px]">
          <Icon name="pinDark" className="size-[6px]" />
        </button>
      </div>
      <div className="flex flex-col pr-2 pl-[6px] text-[#4a4a4a]">
        <a href="#bienvenido" className="mt-[11px] mb-[10px] flex items-center gap-[2px]">
          <Icon name="home" />
          Bienvenido a SOLIDWORKS
        </a>
        {resources.map(({ title, links }) => (
          <section key={title} className="mb-[9px] border-t border-[#b0b0b0] pt-px">
            <div className="flex h-2 items-center justify-between pr-[3px] pl-px">
              <h3 className="font-bold">{title}</h3>
              <Chevron d="m0 6 4-4 4 4" />
            </div>
            {links.map(([icon, label]) => (
              <a key={label} href="#recurso" className="flex h-[11px] items-center gap-[2px]">
                <Icon name={icon} />
                {label}
              </a>
            ))}
          </section>
        ))}
      </div>
    </aside>
  );
}

const sketchTools = [
  ["point", "circleDot", "line", "circle", "trim", "extend"],
  ["tangent", "faintX", "parallel", "corner", "cornerDark"],
  ["dim", "grid", "angle"],
];

function SketchBar() {
  return (
    <div className="flex h-[12px] shrink-0 items-center bg-[#f7f7f7] pl-[2px]">
      {sketchTools.map((group, g) => (
        <div key={g} className="flex h-[11px] items-center gap-[3px] border-r border-[#ccc] px-[3px] first:border-l">
          {group.map((n) => (
            <button key={n} aria-label={n}>
              <Icon name={n} />
            </button>
          ))}
        </div>
      ))}
    </div>
  );
}

export default function App() {
  return (
    <div className="flex h-screen flex-col overflow-hidden bg-[#f7f7f7] font-[Lato,'Noto_Sans',sans-serif] text-[5px] leading-[6px] whitespace-nowrap text-[#222]">
      <TitleBar />
      <Ribbon />
      <div className="flex min-h-0 flex-1">
        <div className="flex min-w-0 flex-1 flex-col">
          <CommandTabs />
          <div className="flex min-h-0 flex-1">
            <SideTools />
            <FeatureManager />
            <Viewport />
          </div>
          <ModelTabs />
        </div>
        <TaskPane />
      </div>
      <SketchBar />
      <footer className="flex h-[5px] shrink-0 items-start overflow-hidden border-t border-[#b9bdb9] leading-[5px]">
        <span className="flex-1">Pieza1</span>
        <span className="border-r border-[#ccc] pr-[2px]">Insuficientemente definido</span>
        <span className="border-r border-[#ccc] px-1">Editando Pieza</span>
        <span className="w-[72px] pl-[26px]">MMGS</span>
        <svg viewBox="0 0 16 16" className="mr-1 w-[14px] shrink-0" aria-hidden="true">
          <circle cx="12" cy="7" r="5" fill="#fff" stroke="#555" strokeWidth="1.500" />
        </svg>
      </footer>
    </div>
  );
}
